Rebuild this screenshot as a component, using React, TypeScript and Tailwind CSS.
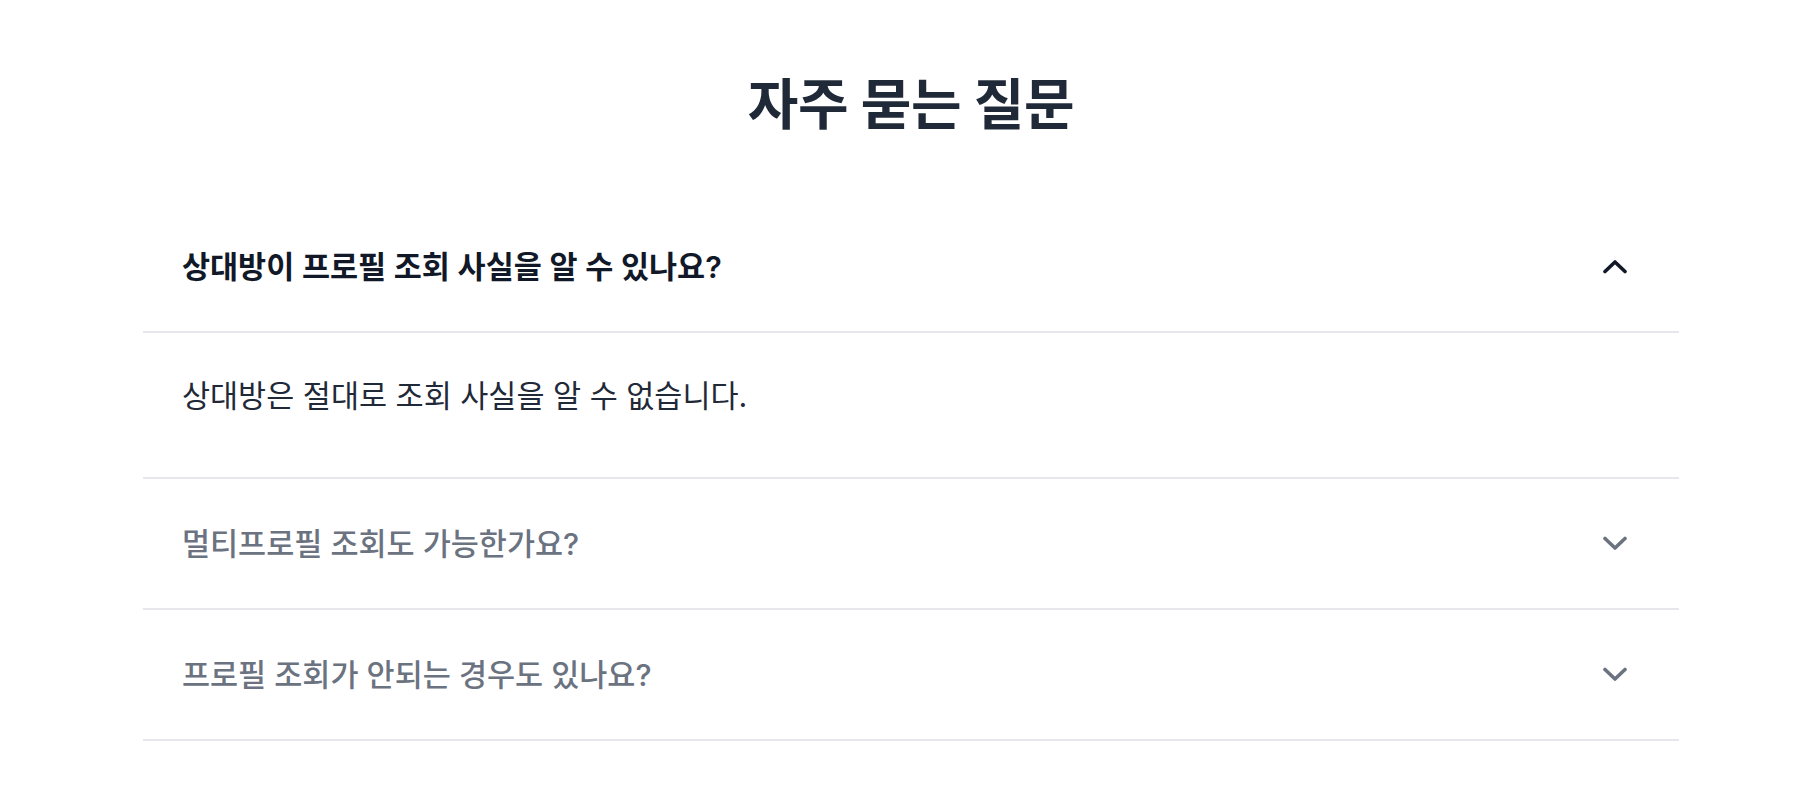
import React, { useState } from "react";

const faqs = [
  { q: "상대방이 프로필 조회 사실을 알 수 있나요?", a: "상대방은 절대로 조회 사실을 알 수 없습니다." },
  { q: "멀티프로필 조회도 가능한가요?", a: "" },
  { q: "프로필 조회가 안되는 경우도 있나요?", a: "" },
];

function Chevron({ up }: { up: boolean }) {
  return (
    <svg width="26" height="15" viewBox="0 0 26 15" fill="none" className={up ? "text-[#111827]" : "text-[#6b7280]"}>
      <path
        d={up ? "M3 12.5 L13 3 L23 12.5" : "M3 2.5 L13 12 L23 2.5"}
        stroke="currentColor"
        strokeWidth="3.6"
        strokeLinecap="round"
        strokeLinejoin="round"
      />
    </svg>
  );
}

export default function App() {
  const [open, setOpen] = useState(0);
  return (
    <div
      className="min-h-screen bg-white pl-[143px] pr-[127px]"
      style={{ fontFamily: 'Inter, "Noto Sans CJK KR", sans-serif' }}
    >
      <h2 className="pt-[71px] text-center text-[55px] leading-[66px] font-bold tracking-[-0.4px] text-[#1f2937]">
        자주 묻는 질문
      </h2>
      <div className="mt-[65px]">
        {faqs.map((f, i) => {
          const isOpen = open === i;
          return (
            <div key={i}>
              <button
                onClick={() => setOpen(isOpen ? -1 : i)}
                className="flex h-[131px] w-full items-center justify-between border-b-2 border-[#e5e7eb] pl-[39px] pr-[51px] text-left"
              >
                <span
                  className={
                    isOpen
                      ? "text-[30.5px] leading-[45px] font-semibold text-[#111827]"
                      : "text-[30.5px] leading-[45px] font-medium text-[#6b7280]"
                  }
                >
                  {f.q}
                </span>
                <Chevron up={isOpen} />
              </button>
              {isOpen && (
                <div className="border-b-2 border-[#e5e7eb] pl-[39px] pt-[40px] pb-[59px] text-[30.5px] leading-[45px] text-[#1f2937]">
                  {f.a}
                </div>
              )}
            </div>
          );
        })}
      </div>
    </div>
  );
}
